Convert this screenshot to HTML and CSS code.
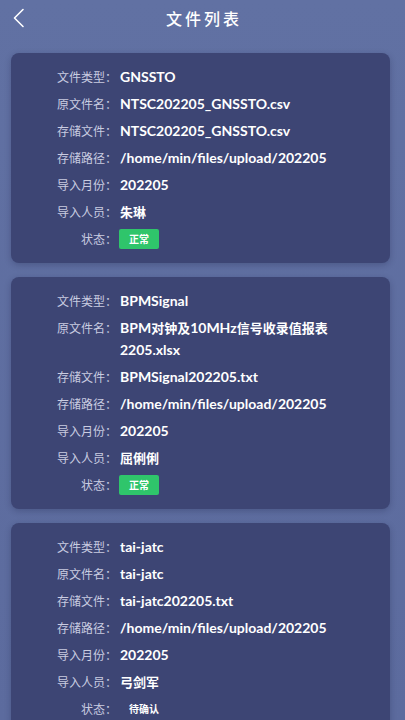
FILE: index.html
```html
<!DOCTYPE html>
<html lang="zh">
<head>
<meta charset="utf-8">
<title>文件列表</title>
<link rel="stylesheet" href="styles.css">
</head>
<body>
<div class="page">
  <header class="header">
    <span class="back">
      <svg width="14" height="20" viewBox="0 0 14 20"><path d="M11 1.5 L2.5 10 L11 18.5" fill="none" stroke="#ffffff" stroke-width="1.6" stroke-linecap="round" stroke-linejoin="round"/></svg>
    </span>
    <h1 class="title">文件列表</h1>
  </header>
  <main class="list">
    <section class="card">
      <div class="row"><span class="label">文件类型：</span><span class="value">GNSSTO</span></div>
      <div class="row"><span class="label">原文件名：</span><span class="value">NTSC202205_GNSSTO.csv</span></div>
      <div class="row"><span class="label">存储文件：</span><span class="value">NTSC202205_GNSSTO.csv</span></div>
      <div class="row"><span class="label">存储路径：</span><span class="value">/home/min/files/upload/202205</span></div>
      <div class="row"><span class="label">导入月份：</span><span class="value">202205</span></div>
      <div class="row"><span class="label">导入人员：</span><span class="value cjk">朱琳</span></div>
      <div class="row status"><span class="label">状态：</span><span class="badge ok">正常</span></div>
    </section>
    <section class="card">
      <div class="row"><span class="label">文件类型：</span><span class="value">BPMSignal</span></div>
      <div class="row"><span class="label">原文件名：</span><span class="value">BPM<span class="cjk">对钟及</span>10MHz<span class="cjk">信号收录值报表</span>2205.xlsx</span></div>
      <div class="row"><span class="label">存储文件：</span><span class="value">BPMSignal202205.txt</span></div>
      <div class="row"><span class="label">存储路径：</span><span class="value">/home/min/files/upload/202205</span></div>
      <div class="row"><span class="label">导入月份：</span><span class="value">202205</span></div>
      <div class="row"><span class="label">导入人员：</span><span class="value cjk">屈俐俐</span></div>
      <div class="row status"><span class="label">状态：</span><span class="badge ok">正常</span></div>
    </section>
    <section class="card">
      <div class="row"><span class="label">文件类型：</span><span class="value">tai-jatc</span></div>
      <div class="row"><span class="label">原文件名：</span><span class="value">tai-jatc</span></div>
      <div class="row"><span class="label">存储文件：</span><span class="value">tai-jatc202205.txt</span></div>
      <div class="row"><span class="label">存储路径：</span><span class="value">/home/min/files/upload/202205</span></div>
      <div class="row"><span class="label">导入月份：</span><span class="value">202205</span></div>
      <div class="row"><span class="label">导入人员：</span><span class="value cjk">弓剑军</span></div>
      <div class="row status"><span class="label">状态：</span><span class="badge pending">待确认</span></div>
    </section>
  </main>
</div>
</body>
</html>
```
FILE: styles.css
```css
html, body {
  margin: 0;
  padding: 0;
}
body {
  background: linear-gradient(180deg, #6171a3 0%, #5c6b9e 100%);
  background-attachment: fixed;
  min-height: 720px;
  font-family: "Noto Sans CJK SC", "Noto Sans", sans-serif;
  color: #ffffff;
}
.page {
  display: flex;
  flex-direction: column;
}
.header {
  height: 36px;
  display: flex;
  align-items: center;
  justify-content: center;
  position: relative;
}
.back {
  position: absolute;
  left: 12px;
  top: 8px;
  width: 14px;
  height: 20px;
  display: flex;
}
.title {
  margin: 0;
  font-size: 16px;
  font-weight: 500;
  letter-spacing: 3px;
  padding-left: 3px;
  line-height: 34px;
}
.list {
  display: flex;
  flex-direction: column;
  gap: 14px;
  padding: 17px 15px 20px 11px;
}
.card {
  background: #3d4574;
  border-radius: 8px;
  padding: 10px 30px 11px 0;
  box-shadow: 0 2px 6px rgba(20, 25, 60, 0.25);
  display: flex;
  flex-direction: column;
}
.row {
  display: flex;
  align-items: flex-start;
  padding: 2.5px 0;
  line-height: 22px;
}
.row.status {
  align-items: center;
  height: 22px;
}
.label {
  flex: 0 0 72px;
  padding-left: 34px;
  text-align: right;
  font-size: 12px;
  color: #c9cce0;
  white-space: nowrap;
}
.value {
  margin-left: 3px;
  flex: 1;
  min-width: 0;
  font-family: "Lato", "Noto Sans CJK SC", sans-serif;
  font-weight: 700;
  font-size: 14px;
  color: #ffffff;
}
.cjk {
  font-family: "Noto Sans CJK SC", sans-serif;
  font-size: 13px;
  font-weight: 700;
}
.badge {
  margin-left: 2px;
  height: 20px;
  padding: 0 10px;
  display: flex;
  align-items: center;
  border-radius: 2px;
  font-size: 10px;
  font-weight: 700;
  color: #ffffff;
}
.badge.ok {
  background: #2fc56b;
}
.badge.pending {
  background: transparent;
}
```
